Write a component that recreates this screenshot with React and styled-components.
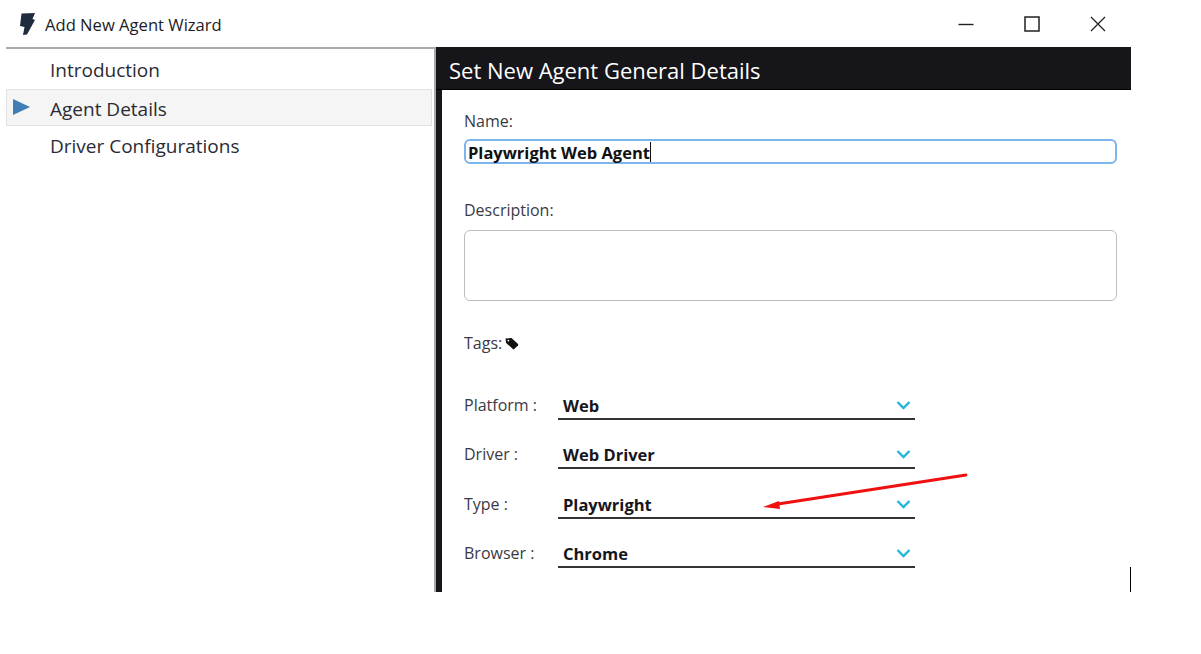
import React from 'react'
import styled, { createGlobalStyle } from 'styled-components'

const GlobalStyle = createGlobalStyle`
  html, body { margin: 0; padding: 0; background: #fff; }
  body { font-family: "Open Sans", "Noto Sans", "Liberation Sans", sans-serif; color: #2b2b33; }
`

const Page = styled.div`
  width: 1201px;
  height: 654px;
  overflow: hidden;
`

const Wizard = styled.div`
  position: relative;
  width: 1131px;
  height: 592px;
  display: flex;
  flex-direction: column;
`

const TitleBar = styled.div`
  height: 47px;
  flex: none;
  display: flex;
  align-items: center;
  padding-left: 18px;
`

const TitleText = styled.span`
  margin: 2px 0 0 9px;
  font-size: 16.6px;
  color: #1c1c24;
`

const WindowButtons = styled.div`
  margin-left: auto;
  display: flex;
  align-items: center;
  gap: 50px;
  padding-right: 25px;
  height: 100%;
`

const Body = styled.div`
  flex: 1;
  display: flex;
  margin-left: 6px;
  min-height: 0;
`

const Sidebar = styled.nav`
  width: 428px;
  flex: none;
  border-top: 2px solid #aaa;
  box-sizing: border-box;
  padding-top: 3px;
`

const NavItem = styled.div`
  width: 426px;
  box-sizing: border-box;
  height: ${p => (p.$active ? '37px' : '36px')};
  margin: ${p => (p.$active ? '1px 0 2px' : '0')};
  display: flex;
  align-items: center;
  padding: ${p => (p.$active ? '2px 0 0 6px' : '0 0 0 44px')};
  font-size: 19px;
  color: #2b2b33;
  background: ${p => (p.$active ? '#f5f5f5' : 'transparent')};
  border: ${p => (p.$active ? '1.5px solid #e2e2e2' : 'none')};
`

const ActiveMarker = styled.span`
  width: 0;
  height: 0;
  border-left: 17px solid #3f7fb5;
  border-top: 8.5px solid transparent;
  border-bottom: 8.5px solid transparent;
  margin: 0 20px 3px 0;
`

const Main = styled.main`
  flex: 1;
  display: flex;
  flex-direction: column;
  border-left: 2px solid #a8a8ac;
  min-width: 0;
`

const Header = styled.div`
  height: 43px;
  flex: none;
  box-sizing: border-box;
  background: #15151a;
  border-bottom: 1px solid #000;
  color: #fff;
  font-size: 22px;
  display: flex;
  align-items: center;
  padding: 4px 0 0 13px;
`

const Content = styled.div`
  flex: 1;
  border-left: 6px solid #15151a;
  padding: 20px 14px 0 22px;
  min-height: 0;
`

const Label = styled.div`
  font-size: 16px;
  line-height: 22px;
  color: #3a3a44;
`

const NameInput = styled.div`
  height: 25px;
  box-sizing: border-box;
  margin-top: 7px;
  border: 2px solid #7cb4ec;
  border-radius: 6px;
  display: flex;
  align-items: center;
  padding: 1px 0 0 2px;
  font-size: 16.5px;
  font-weight: 700;
  color: #111;
`

const Caret = styled.span`
  width: 1px;
  height: 20px;
  background: #111;
`

const DescriptionLabel = styled(Label)`
  margin-top: 35px;
`

const DescriptionBox = styled.div`
  height: 71px;
  box-sizing: border-box;
  margin-top: 9px;
  border: 1.5px solid #bcbcc2;
  border-radius: 6px;
`

const TagsRow = styled(Label)`
  margin-top: 31px;
  display: flex;
  align-items: center;
  gap: 3px;
`

const Fields = styled.div`
  margin-top: 38px;
  display: flex;
  flex-direction: column;
`

const FieldRow = styled.div`
  display: flex;
  height: ${p => p.$height}px;
`

const FieldLabel = styled(Label)`
  width: 94px;
  flex: none;
  padding-top: 2px;
`

const Select = styled.div`
  width: 357px;
  height: 28px;
  box-sizing: border-box;
  border-bottom: 2px solid #333338;
  display: flex;
  align-items: flex-end;
  justify-content: space-between;
  padding: 0 4px 0 5px;
  font-size: 16.5px;
  font-weight: 700;
  line-height: 24px;
  color: #16161c;
`

const Chevron = styled.svg`
  width: 15px;
  height: 10px;
  margin-bottom: 8px;
  fill: none;
  stroke: #25b5d6;
  stroke-width: 2.4;
`

const EdgeLine = styled.div`
  position: absolute;
  right: 0;
  bottom: 0;
  width: 1px;
  height: 25px;
  background: #000;
`

const Annotation = styled.svg`
  position: absolute;
  left: 760px;
  top: 470px;
  width: 210px;
  height: 45px;
`

function BoltIcon() {
  return (
    <svg width="18" height="24" viewBox="0 0 18 24">
      <path d="M3.5 1.5 L17 1 L14.5 7 L17 8 L9 22.5 L5 23 L6.5 15 L2 14 Z" fill="#1f2c3f" />
    </svg>
  )
}

function TagIcon() {
  return (
    <svg width="14" height="13" viewBox="0 0 14 13">
      <path d="M0.5 1.5 L6.5 1 L13 7 Q13.5 7.8 13 8.4 L9.2 12 Q8.5 12.6 7.8 12 L1 5.8 Z" fill="#111" />
      <circle cx="3.4" cy="3.6" r="0.9" fill="#fff" />
    </svg>
  )
}

function Field({ label, value, height }) {
  return (
    <FieldRow $height={height}>
      <FieldLabel>{label}</FieldLabel>
      <Select>
        <span>{value}</span>
        <Chevron viewBox="0 0 15 10">
          <path d="M1.5 2 L7.5 8 L13.5 2" />
        </Chevron>
      </Select>
    </FieldRow>
  )
}

export default function App() {
  return (
    <Page>
      <GlobalStyle />
      <Wizard>
        <TitleBar>
          <BoltIcon />
          <TitleText>Add New Agent Wizard</TitleText>
          <WindowButtons>
            <svg width="16" height="16" viewBox="0 0 16 16">
              <path d="M0.5 8.5 H15.5" stroke="#222" strokeWidth="1.4" />
            </svg>
            <svg width="16" height="16" viewBox="0 0 16 16">
              <rect x="1" y="1" width="14" height="14" fill="none" stroke="#222" strokeWidth="1.5" />
            </svg>
            <svg width="16" height="16" viewBox="0 0 16 16">
              <path d="M1 1 L15 15 M15 1 L1 15" stroke="#222" strokeWidth="1.3" />
            </svg>
          </WindowButtons>
        </TitleBar>
        <Body>
          <Sidebar>
            <NavItem>Introduction</NavItem>
            <NavItem $active>
              <ActiveMarker />
              Agent Details
            </NavItem>
            <NavItem>Driver Configurations</NavItem>
          </Sidebar>
          <Main>
            <Header>Set New Agent General Details</Header>
            <Content>
              <Label>Name:</Label>
              <NameInput>
                Playwright Web Agent
                <Caret />
              </NameInput>
              <DescriptionLabel>Description:</DescriptionLabel>
              <DescriptionBox />
              <TagsRow>
                Tags: <TagIcon />
              </TagsRow>
              <Fields>
                <Field label="Platform :" value="Web" height={49} />
                <Field label="Driver :" value="Web Driver" height={50} />
                <Field label="Type :" value="Playwright" height={49} />
                <Field label="Browser :" value="Chrome" height={49} />
              </Fields>
            </Content>
          </Main>
        </Body>
        <EdgeLine />
        <Annotation viewBox="0 0 210 45">
          <path d="M206 5 L18 34" stroke="#f01010" strokeWidth="2.8" strokeLinecap="round" />
          <path d="M3 37 L19 31 L20 39 Z" fill="#f01010" />
        </Annotation>
      </Wizard>
    </Page>
  )
}
